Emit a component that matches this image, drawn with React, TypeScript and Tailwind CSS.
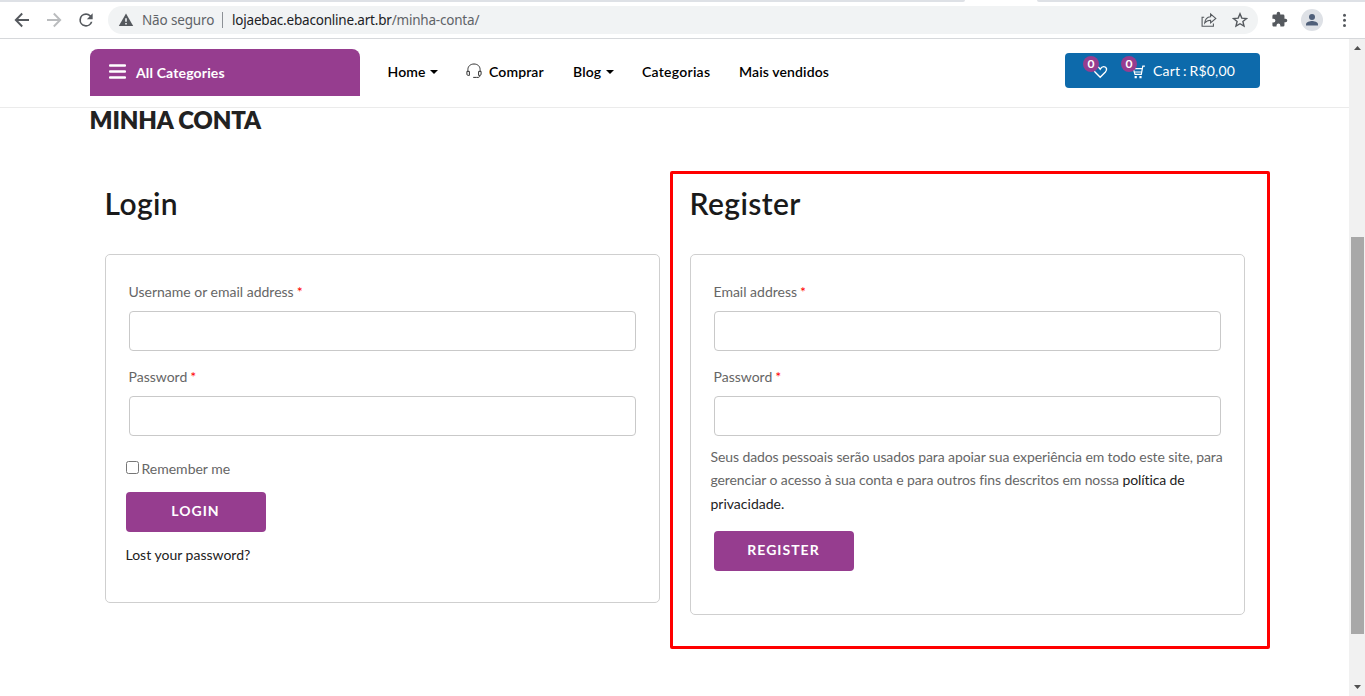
import type { ReactNode } from "react";

function Toolbar() {
  return (
    <div className="h-[39px] shrink-0 border-b border-[#d6d8db] bg-white">
      <div className="flex h-[2px] justify-between">
        <div className="w-[965px] rounded-br-[2px] bg-[#dee1e6]" />
        <div className="w-[328px] rounded-bl-[2px] bg-[#dee1e6]" />
      </div>
      <div className="flex h-9 items-center">
        <svg className="ml-[10px] size-6" viewBox="0 0 24 24" fill="none" stroke="#55595e" strokeWidth="1.9">
          <path d="M19 12H6M12.2 5.5 5.8 12l6.4 6.5" />
        </svg>
        <svg className="ml-2 size-6" viewBox="0 0 24 24" fill="none" stroke="#babcbe" strokeWidth="1.9">
          <path d="M5 12h13M11.8 5.5l6.4 6.5-6.4 6.5" />
        </svg>
        <svg className="ml-[10px] size-5" viewBox="0 0 24 24" fill="#55595e">
          <path d="M17.65 6.35A7.96 7.96 0 0 0 12 4a8 8 0 1 0 7.73 10h-2.08A6 6 0 1 1 12 6c1.66 0 3.14.69 4.22 1.78L13 11h7V4z" />
        </svg>
        <div className="ml-3 flex h-7 w-[1150px] items-center rounded-full bg-[#f1f3f4] font-['Noto_Sans',sans-serif] text-[14px]">
          <svg className="ml-[10px] size-4" viewBox="0 0 16 16">
            <path d="M8 1.5 15.2 14H.8z" fill="#55595e" />
            <path d="M7.2 6.2h1.6v3.6H7.2zM7.2 10.9h1.6v1.5H7.2z" fill="#f1f3f4" />
          </svg>
          <span className="ml-2 w-[74px] whitespace-nowrap text-[13.5px] tracking-[-0.15px] text-[#5f6368]">Não seguro</span>
          <span className="ml-[6px] h-4 w-px bg-[#8d9196]" />
          <span className="ml-[9px] whitespace-nowrap text-[13.5px] tracking-[-0.2px] text-[#202124]">
            lojaebac.ebaconline.art.br<span className="text-[#5f6368]">/minha-conta/</span>
          </span>
          <svg className="mr-[15px] ml-auto size-4" viewBox="0 0 16 16" fill="none" stroke="#55595e" strokeWidth="1.1">
            <path d="M3.2 5.2H1.1v9h11.3v-2.7M9.6 2v2.7C5.8 5 4 7.2 3.7 11c1.5-2 3.2-2.8 5.9-2.8v2.7l5.2-4.5z" />
          </svg>
          <svg className="mr-[10px] size-4" viewBox="0 0 16 16" fill="none" stroke="#55595e" strokeWidth="1.4">
            <path d="m8 1.8 1.8 4.3 4.7.4-3.6 3 1.1 4.6L8 11.7l-4 2.4 1.1-4.6-3.6-3 4.7-.4z" />
          </svg>
        </div>
        <svg className="mb-px ml-[13px] size-[17px]" viewBox="0 0 24 24" fill="#55595e">
          <path d="M20.5 11H19V7a2 2 0 0 0-2-2h-4V3.5a2.5 2.5 0 0 0-5 0V5H4a2 2 0 0 0-2 2v3.8h1.5a2.7 2.7 0 0 1 0 5.4H2V20c0 1.1.9 2 2 2h3.8v-1.5a2.7 2.7 0 0 1 5.4 0V22H17a2 2 0 0 0 2-2v-4h1.5a2.5 2.5 0 0 0 0-5" />
        </svg>
        <svg className="ml-[13px] size-[22px]" viewBox="0 0 22 22">
          <circle cx="11" cy="11" r="11" fill="#dee1e6" />
          <circle cx="11" cy="8" r="3" fill="#50607a" />
          <path d="M5 16.5v-1.3c0-2.1 4-3.2 6-3.2s6 1.1 6 3.2v1.3z" fill="#50607a" />
        </svg>
        <svg className="ml-5 h-4 w-[3px]" viewBox="0 0 3 16" fill="#55595e">
          <circle cx="1.5" cy="3.2" r="1.5" />
          <circle cx="1.5" cy="8.3" r="1.5" />
          <circle cx="1.5" cy="13.4" r="1.5" />
        </svg>
      </div>
    </div>
  );
}

function Caret() {
  return (
    <svg className="mt-[2px] ml-[4.5px] h-1 w-2" viewBox="0 0 8 4" fill="#000">
      <path d="M0 0h8L4 4z" />
    </svg>
  );
}

function CountBadge() {
  return (
    <span className="absolute top-[-8px] left-[-9px] flex size-4 items-center justify-center rounded-full bg-[#963d8f] text-[12px] leading-none font-bold">
      0
    </span>
  );
}

function SiteHeader() {
  return (
    <header className="flex h-[69px] shrink-0 items-start border-b border-[#ebebeb] pl-[90px]">
      <button className="mt-[10px] flex h-[47px] w-[270px] items-center rounded-t-[8px] bg-[#963d8f] pl-[19px] text-[14px] font-bold text-white">
        <svg className="mb-[2px] h-[15px] w-[17px]" viewBox="0 0 17 15" stroke="#fff" strokeWidth="2.4" strokeLinecap="round">
          <path d="M1 1.5h15M1 7.5h15M1 13.5h15" />
        </svg>
        <span className="ml-[10px] pb-px tracking-[0.15px]">All Categories</span>
      </button>
      <nav className="ml-[28px] flex h-[64px] items-center text-[14px] font-semibold tracking-[0.12px] whitespace-nowrap text-black">
        <a className="-ml-[0.5px] flex w-[78.5px] items-center">Home<Caret /></a>
        <a className="flex w-[107px] items-center">
          <svg className="mr-[7px] size-4" viewBox="0 0 16 16" fill="none" stroke="#333" strokeWidth="1">
            <path d="M1.9 8V6.5C1.9 3.2 4.5 1 8 1s6.1 2.2 6.1 5.5V8M.9 8.4h2.5v4H2.2c-.7 0-1.3-.4-1.3-1.2zM12.6 8.4h2.5v2.8c0 .8-.6 1.2-1.3 1.2h-1.2zM13.9 12.4c0 1.3-.7 2-1.9 2h-1.5M7.2 14.4h3.3" />
          </svg>
          Comprar
        </a>
        <a className="flex w-[69px] items-center">Blog<Caret /></a>
        <a className="w-[97px] tracking-[0.25px]">Categorias</a>
        <a>Mais vendidos</a>
      </nav>
      <div className="mt-[14px] mr-[89px] ml-auto flex h-[35px] w-[195px] items-center rounded-[4px] bg-[#0d6aab] pl-[27px] text-[14px] text-white">
        <span className="relative mt-[3px]">
          <svg className="size-4" viewBox="0 0 16 16" fill="none" stroke="#fff" strokeWidth="1.4">
            <path d="M8.2 13.2 3 8C.9 5.8 1.7 2.8 4.5 2.6 6.3 2.5 7.4 3.8 8.2 5.2c.8-1.4 1.9-2.7 3.7-2.6 2.8.2 3.6 3.2 1.5 5.4z" />
          </svg>
          <CountBadge />
        </span>
        <span className="relative mt-[3px] ml-[22px]">
          <svg className="size-4" viewBox="0 0 16 16" fill="none" stroke="#fff" strokeWidth="1.2">
            <path d="M14.9 2.1h-2.1L11.3 10.4H5L3.3 4.6h9M4.1 8h7.6" />
            <path d="M4.6 12h2.2v2.2H4.6zM9.4 12h2.2v2.2H9.4z" fill="#fff" stroke="none" />
          </svg>
          <CountBadge />
        </span>
        <span className="ml-[7px] tracking-[0.2px] whitespace-nowrap [word-spacing:-1px]">Cart : R$0,00</span>
      </div>
    </header>
  );
}

function Field({ label, type }: { label: string; type: string }) {
  return (
    <label className="mb-[15px] block px-[3px]">
      <span className="-ml-[0.5px] block h-[30px] text-[14px] leading-[22px]">
        {label}
        <span className="ml-[3px] text-[#ff0000]">*</span>
      </span>
      <input type={type} className="block h-10 w-full rounded-[4px] border border-[#c9c9c9] bg-white px-3 outline-none" />
    </label>
  );
}

function Panel({ title, className, children }: { title: string; className: string; children: ReactNode }) {
  return (
    <section className="w-[555px]">
      <h2 className="-ml-[0.5px] h-[70px] text-[30px] leading-[38px] font-semibold tracking-[0.4px] text-[#1a1a1a]">{title}</h2>
      <form className={`rounded-[5px] border border-[#cfcfcf] px-5 pt-[26px] ${className}`}>{children}</form>
    </section>
  );
}

function Scrollbar() {
  return (
    <div className="flex w-4 shrink-0 flex-col items-center bg-[#f1f1f1]">
      <svg className="mt-[7px] h-1 w-[7px]" viewBox="0 0 7 4" fill="#505050">
        <path d="M0 4h7L3.5 0z" />
      </svg>
      <div className="mt-[187px] h-[397px] w-[13px] bg-[#a8a8a8]" />
      <svg className="mt-[51px] h-1 w-[7px]" viewBox="0 0 7 4" fill="#505050">
        <path d="M0 0h7L3.5 4z" />
      </svg>
    </div>
  );
}

export default function App() {
  return (
    <div className="flex h-[696px] w-[1365px] flex-col overflow-hidden bg-white font-[Lato,sans-serif] text-[14px] text-[#666]">
      <Toolbar />
      <div className="flex min-h-0 flex-1">
        <div className="flex min-w-0 flex-1 flex-col">
          <SiteHeader />
          <main className="pl-[90px]">
            <h1 className="-ml-[0.5px] h-[63px] text-[24px] leading-[23px] font-extrabold tracking-[-0.15px] text-[#222]">MINHA CONTA</h1>
            <div className="flex items-start pl-[15px]">
              <div className="pt-[13px]">
                <Panel title="Login" className="h-[349px]">
                  <Field label="Username or email address" type="text" />
                  <Field label="Password" type="password" />
                  <label className="mt-[21px] flex h-6 items-center">
                    <input type="checkbox" className="mt-[-3px] mr-[2.5px] size-[13px]" />
                    <span className="mt-[-2px]">Remember me</span>
                  </label>
                  <button type="button" className="mt-[11px] block h-10 w-[140px] rounded-[4px] bg-[#963d8f] pr-px pb-[3px] text-[14px] font-bold tracking-[1px] text-white">
                    LOGIN
                  </button>
                  <a className="mt-[12px] -ml-[0.5px] block leading-[22px] text-[#222]">Lost your password?</a>
                </Panel>
              </div>
              <div className="ml-[10px] h-[478px] w-[600px] rounded-[2px] border-[3px] border-[#ff0000] pt-[10px] pl-[17px]">
                <Panel title="Register" className="h-[361px]">
                  <Field label="Email address" type="email" />
                  <Field label="Password" type="password" />
                  <p className="-mt-[6.4px] -ml-[0.5px] leading-[23.6px] tracking-[-0.1px] whitespace-nowrap">
                    Seus dados pessoais serão usados para apoiar sua experiência em todo este site, para
                    <br />
                    gerenciar o acesso à sua conta e para outros fins descritos em nossa{" "}
                    <a className="text-[#222]">
                      política de
                      <br />
                      <span className="tracking-normal">privacidade.</span>
                    </a>
                  </p>
                  <button type="button" className="mt-[15.6px] ml-[3px] block h-10 w-[140px] rounded-[4px] bg-[#963d8f] pr-px pb-[3px] text-[14px] font-bold tracking-[1px] text-white">
                    REGISTER
                  </button>
                </Panel>
              </div>
            </div>
          </main>
        </div>
        <Scrollbar />
      </div>
    </div>
  );
}
